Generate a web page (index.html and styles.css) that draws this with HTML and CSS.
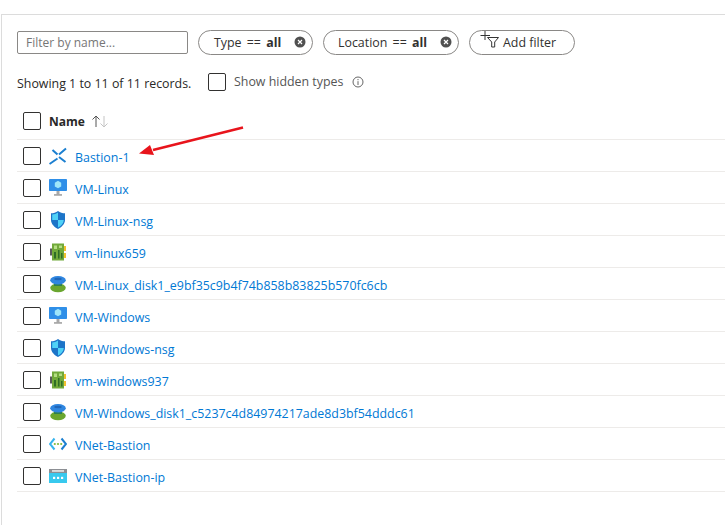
FILE: index.html
```html
<!DOCTYPE html>
<html lang="en">
<head>
<meta charset="utf-8">
<title>Resources</title>
<link rel="stylesheet" href="styles.css">
</head>
<body>
<svg width="0" height="0" class="defs">
  <symbol id="i-bastion" viewBox="0 0 18 18">
    <path d="M.5 17 L8.5 11.5 M3.5 3 L8.5 7.5 M10 10 L16.5 15 M10 7.5 L17 1.5" fill="none" stroke="#1b7fd0" stroke-width="2"/>
  </symbol>
  <symbol id="i-vm" viewBox="0 0 18 18">
    <rect x="0" y="0" width="18" height="12" rx=".8" fill="#2f8fe8"/>
    <path d="M9 1.8 L12.2 3.7 V7.4 L9 9.3 L5.8 7.4 V3.7Z" fill="#9fe6fa"/>
    <path d="M7.5 12 H10.5 V15.3 H7.5Z" fill="#a8a8a8"/>
    <path d="M5 15.3 H13 V16.6 H5Z" fill="#8c8c8c"/>
  </symbol>
  <symbol id="i-nsg" viewBox="0 0 18 18">
    <path d="M9 0 C11 1.6 13.5 2.3 16 2.3 V9 C16 13 12.5 16.3 9 18 C5.5 16.3 2 13 2 9 V2.3 C4.5 2.3 7 1.6 9 0Z" fill="#1c74c8"/>
    <path d="M9 1.6 V9 H3.2 V3.5 C5.2 3.4 7.3 3 9 1.6Z M9 9 H14.8 C14.6 12.4 12 15 9 16.5Z" fill="#4fd2f7"/>
  </symbol>
  <symbol id="i-nic" viewBox="0 0 18 18">
    <rect x="1" y="5.5" width="2" height="7" fill="#5a5a5a"/>
    <rect x="3" y="0.5" width="12" height="17" fill="#71a93a"/>
    <rect x="15" y="3" width="2" height="5" fill="#f2c12e"/>
    <rect x="15" y="10" width="2" height="5" fill="#f2c12e"/>
    <path d="M5 9 H7 V15.5 H5Z M9 7 H10.5 V15.5 H9Z M12 10 H13.5 V15.5 H12Z" fill="#2f6d26"/>
    <path d="M5 2.5 H8 V6 H5Z M10 2.5 H13 V5 H10Z" fill="#b5dd84"/>
  </symbol>
  <symbol id="i-disk" viewBox="0 0 18 18">
    <ellipse cx="9" cy="12.8" rx="7.8" ry="4.4" fill="#6aa62f"/>
    <rect x="5" y="7" width="8" height="4" fill="#2f7f52"/>
    <ellipse cx="9" cy="5.2" rx="7.8" ry="4.2" fill="#2f86e0"/>
    <ellipse cx="9" cy="4" rx="3.8" ry="1.2" fill="#1f66b8"/>
  </symbol>
  <symbol id="i-vnet" viewBox="0 0 18 18">
    <path d="M5.5 3.5 L1 9 L5.5 14.5" fill="none" stroke="#36b4ee" stroke-width="2"/>
    <path d="M12.5 3.5 L17 9 L12.5 14.5" fill="none" stroke="#1b7fd0" stroke-width="2"/>
    <circle cx="5.8" cy="9" r="1.1" fill="#7fba3a"/>
    <circle cx="9" cy="9" r="1.1" fill="#7fba3a"/>
    <circle cx="12.2" cy="9" r="1.1" fill="#7fba3a"/>
  </symbol>
  <symbol id="i-ip" viewBox="0 0 18 18">
    <rect x="0" y="2" width="18" height="14" fill="#38c9ee"/>
    <rect x="0" y="2" width="18" height="4" fill="#8c8f94"/>
    <rect x="3" y="3.1" width="12" height="1.7" fill="#e4e4e4"/>
    <rect x="4" y="9.8" width="2.2" height="2.2" fill="#fff"/>
    <rect x="8" y="9.8" width="2.2" height="2.2" fill="#fff"/>
    <rect x="12" y="9.8" width="2.2" height="2.2" fill="#fff"/>
  </symbol>
</svg>

<main class="blade">
  <div class="filters">
    <input class="name-filter" type="text" placeholder="Filter by name...">
    <span class="pill pill-type"><span>Type == <b>all</b></span>
      <svg class="close" viewBox="0 0 12 12"><circle cx="6" cy="6" r="5.5" fill="#505050"/><path d="M4 4 L8 8 M8 4 L4 8" stroke="#fff" stroke-width="1.2"/></svg>
    </span>
    <span class="pill pill-loc"><span>Location == <b>all</b></span>
      <svg class="close" viewBox="0 0 12 12"><circle cx="6" cy="6" r="5.5" fill="#505050"/><path d="M4 4 L8 8 M8 4 L4 8" stroke="#fff" stroke-width="1.2"/></svg>
    </span>
    <span class="pill pill-add">
      <svg class="add-icon" viewBox="0 0 20 18"><path d="M5 0 V9 M.5 4.5 H10" stroke="#333" stroke-width="1" fill="none"/><path d="M7.5 6.5 H18.5 L14.7 11 V16 H11.7 V11Z" stroke="#333" stroke-width="1" fill="none"/></svg>
      <span>Add filter</span>
    </span>
  </div>

  <div class="status">
    <span class="count">Showing 1 to 11 of 11 records.</span>
    <span class="check"></span>
    <span class="hidden-label">Show hidden types</span>
    <svg class="info" viewBox="0 0 12 12"><circle cx="6" cy="6" r="5" fill="none" stroke="#666" stroke-width="1"/><path d="M6 5.2 V9 M6 3 V4.2" stroke="#666" stroke-width="1"/></svg>
  </div>

  <div class="table">
    <div class="row head">
      <span class="check"></span>
      <span class="name-head">Name</span>
      <svg class="sort" viewBox="0 0 18 14"><path d="M5 13 V2 M1.5 5.5 L5 2 L8.5 5.5" fill="none" stroke="#555" stroke-width="1"/><path d="M13 2 V13 M9.5 9.5 L13 13 L16.5 9.5" fill="none" stroke="#c4c4c4" stroke-width="1"/></svg>
    </div>
    <div class="row"><span class="check"></span><svg class="ri"><use href="#i-bastion"/></svg><a class="link">Bastion-1</a></div>
    <div class="row"><span class="check"></span><svg class="ri"><use href="#i-vm"/></svg><a class="link">VM-Linux</a></div>
    <div class="row"><span class="check"></span><svg class="ri"><use href="#i-nsg"/></svg><a class="link">VM-Linux-nsg</a></div>
    <div class="row"><span class="check"></span><svg class="ri"><use href="#i-nic"/></svg><a class="link">vm-linux659</a></div>
    <div class="row"><span class="check"></span><svg class="ri"><use href="#i-disk"/></svg><a class="link">VM-Linux_disk1_e9bf35c9b4f74b858b83825b570fc6cb</a></div>
    <div class="row"><span class="check"></span><svg class="ri"><use href="#i-vm"/></svg><a class="link">VM-Windows</a></div>
    <div class="row"><span class="check"></span><svg class="ri"><use href="#i-nsg"/></svg><a class="link">VM-Windows-nsg</a></div>
    <div class="row"><span class="check"></span><svg class="ri"><use href="#i-nic"/></svg><a class="link">vm-windows937</a></div>
    <div class="row"><span class="check"></span><svg class="ri"><use href="#i-disk"/></svg><a class="link">VM-Windows_disk1_c5237c4d84974217ade8d3bf54dddc61</a></div>
    <div class="row"><span class="check"></span><svg class="ri"><use href="#i-vnet"/></svg><a class="link">VNet-Bastion</a></div>
    <div class="row"><span class="check"></span><svg class="ri"><use href="#i-ip"/></svg><a class="link">VNet-Bastion-ip</a></div>
  </div>
</main>

<svg class="arrow" width="110" height="40" viewBox="0 0 110 40">
  <path d="M104 2.5 L14 25" stroke="#e8141c" stroke-width="2.8" fill="none"/>
  <path d="M0 28.5 L11 20 L15 30 Z" fill="#e8141c"/>
</svg>
</body>
</html>
```
FILE: styles.css
```css
html, body {
  margin: 0;
  height: 100%;
  background: #fff;
  overflow: hidden;
}
body {
  position: relative;
  font-family: "Open Sans", "Noto Sans", "Liberation Sans", sans-serif;
  font-size: 12.4px;
  color: #292827;
}
.defs { position: absolute; }
.blade {
  box-sizing: border-box;
  height: 525px;
  margin-top: 14px;
  margin-left: 1px;
  padding: 15px 0 0 15px;
  border-top: 1px solid #dcdcdc;
  border-left: 1px solid #dcdcdc;
}
.filters {
  display: flex;
  align-items: center;
  gap: 10px;
  height: 24px;
}
.name-filter {
  box-sizing: border-box;
  width: 171px;
  height: 23px;
  padding: 0 8px;
  border: 1px solid #8a8886;
  border-radius: 2px;
  font: inherit;
  font-size: 12px;
  color: #292827;
  outline: none;
}
.name-filter::placeholder { color: #767676; opacity: 1; }
.pill {
  box-sizing: border-box;
  display: flex;
  align-items: center;
  justify-content: space-between;
  height: 25px;
  border: 1px solid #8a8886;
  border-radius: 13px;
  white-space: pre;
  color: #323130;
}
.pill b { font-weight: 700; }
.pill-type { width: 115px; padding: 0 6px 0 15px; word-spacing: 2px; }
.pill-loc { width: 136px; padding: 0 6px 0 14px; word-spacing: 2px; }
.pill-add { width: 106px; padding-left: 10px; justify-content: flex-start; }
.close { width: 12px; height: 12px; flex: none; }
.add-icon { width: 20px; height: 18px; margin-right: 3px; flex: none; margin-top: -4px; }
.status {
  display: flex;
  align-items: center;
  height: 18px;
  margin-top: 19px;
}
.count { width: 191px; padding-top: 2px; }
.check {
  box-sizing: border-box;
  display: block;
  flex: none;
  width: 18px;
  height: 18px;
  border: 1px solid #323130;
  border-radius: 2px;
  background: #fff;
}
.hidden-label { margin-left: 8px; color: #555; padding-bottom: 2px; }
.info { width: 12px; height: 12px; margin-left: 9px; }
.table { margin-top: 13px; width: 708px; }
.row {
  box-sizing: border-box;
  display: flex;
  align-items: center;
  height: 32px;
  padding-left: 6px;
  border-bottom: 1px solid #edebe9;
}
.head { height: 36px; padding-bottom: 1px; }
.name-head { margin-left: 8px; font-weight: 700; font-size: 12px; color: #292827; }
.sort { width: 18px; height: 14px; margin-left: 6px; }
.ri { width: 18px; height: 18px; margin-left: 8px; flex: none; }
.link { margin-left: 8px; padding-top: 4px; color: #0078d4; white-space: nowrap; }
.arrow {
  position: absolute;
  left: 139px;
  top: 125px;
}
```
